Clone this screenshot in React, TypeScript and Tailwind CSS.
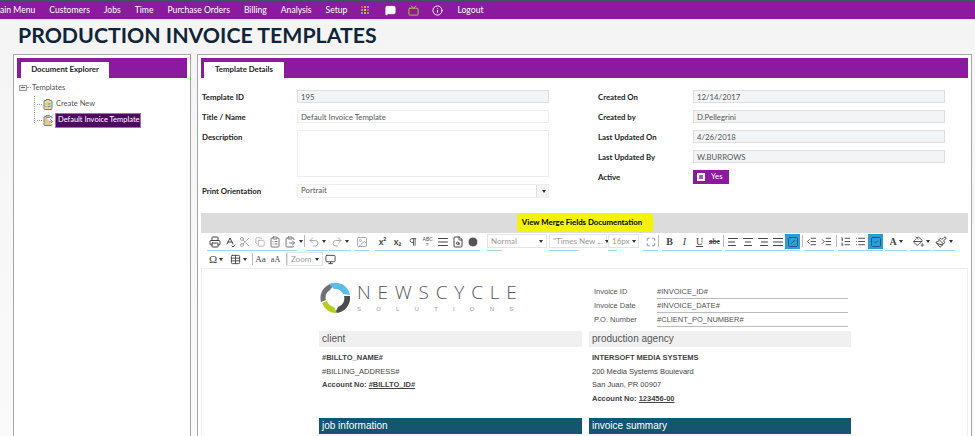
import type { ReactNode } from "react";
import {
  AlignCenter, AlignJustify, AlignLeft, AlignRight, ClipboardList, ClipboardPaste, Copy, Clock,
  FileSearch, Image, IndentDecrease, IndentIncrease, Info, List, ListOrdered, Maximize, MessageSquare,
  Monitor, PaintBucket, Paintbrush, Pilcrow, Printer, Redo2, Scissors, SpellCheck, SquareCheck, SquareSlash,
  Table, TextAlignJustify, Tv, Undo2,
} from "lucide-react";

const menu = ["ain Menu", "Customers", "Jobs", "Time", "Purchase Orders", "Billing", "Analysis", "Setup"];

function Caret() {
  return <span className="w-0 h-0 ml-[2px] border-x-[2px] border-x-transparent border-t-[3px] border-t-[#333]" />;
}

function Tool({ children, active, caret }: { children: ReactNode; active?: boolean; caret?: boolean }) {
  return (
    <span className={`flex items-center justify-center h-[15px] text-[#444] shrink-0 ${caret ? "w-[22px]" : "w-[15px]"} ${active ? "bg-[#2a9fd6]" : ""}`}>
      {children}
      {caret && <Caret />}
    </span>
  );
}

function Group({ children, className = "" }: { children: ReactNode; className?: string }) {
  return <div className={`flex h-[17px] border-b border-[#a9d6ec] ${className}`}>{children}</div>;
}

function Sep({ className = "" }: { className?: string }) {
  return <span className={`w-px h-[12px] mt-[1px] bg-[#bbb] shrink-0 ${className}`} />;
}

function Pick({ label, width, line, className = "" }: { label: string; width: string; line: string; className?: string }) {
  return (
    <div className={`flex flex-col shrink-0 ${width} ${className}`}>
      <span className="flex items-center justify-between h-[14px] px-[3px] border border-[#e4e4e4] text-[8px] text-[#999] whitespace-nowrap">
        {label}
        <Caret />
      </span>
      <span className={`mt-[2px] h-px bg-[#a9d6ec] ${line}`} />
    </div>
  );
}

function Field({ label, value, grey, h = "h-[13px]" }: { label: string; value?: string; grey?: boolean; h?: string }) {
  return (
    <div className="flex items-start">
      <span className="w-[95px] h-[13px] font-bold text-[#222] leading-[14px]">{label}</span>
      <span className={`w-[252px] px-[3px] leading-[12px] border text-[#555] ${h} ${grey ? "bg-[#f3f4f6] border-[#dedede]" : "bg-white border-[#eee]"}`}>
        {value}
      </span>
    </div>
  );
}

function Logo() {
  return (
    <svg viewBox="0 0 32 32" className="w-[32px] h-[32px] shrink-0">
      <path d="M16 1 A15 15 0 0 0 2 20 L7 18 A9 9 0 0 1 11 8 Z" fill="#6f7072" />
      <path d="M10 2 A15 15 0 0 1 31 13 L24 12 A9 9 0 0 0 15 7 Z" fill="#5cbde5" />
      <path d="M31 14 A15 15 0 0 1 16 31 L19 25 A9 9 0 0 0 25 14 Z" fill="#4b4c50" />
      <path d="M3 21 A15 15 0 0 0 18 31 L15 25 A9 9 0 0 1 8 19 Z" fill="#b6cd1c" />
    </svg>
  );
}

function Invoice({ label, value }: { label: string; value: string }) {
  return (
    <div className="flex items-start h-[14px] pl-[5px]">
      <span className="w-[63px] text-[#555]">{label}</span>
      <span className="w-[191px] h-[13px] border-b border-[#bbb] text-[#555]">{value}</span>
    </div>
  );
}

export default function App() {
  return (
    <div className="w-[975px] h-[436px] overflow-hidden bg-gradient-to-b from-[#f4f4f4] to-[#fafafa] font-['Lato',sans-serif] text-[7.8px]">
      <nav className="flex items-center h-[19px] bg-[#8b1a9f] border-t border-[#44506a] text-white text-[8.6px] gap-[14px]">
        {menu.map(m => <span key={m}>{m}</span>)}
        <span className="grid grid-cols-3 gap-px">
          <span className="w-[2px] h-[2px] bg-[#e05050]" /><span className="w-[2px] h-[2px] bg-[#e8a040]" /><span className="w-[2px] h-[2px] bg-[#50b0e0]" />
          <span className="w-[2px] h-[2px] bg-[#60c060]" /><span className="w-[2px] h-[2px] bg-[#e8d040]" /><span className="w-[2px] h-[2px] bg-[#e05050]" />
          <span className="w-[2px] h-[2px] bg-[#50b0e0]" /><span className="w-[2px] h-[2px] bg-[#e8a040]" /><span className="w-[2px] h-[2px] bg-[#60c060]" />
        </span>
        <MessageSquare className="w-[11px] h-[11px] ml-[2px] fill-white" />
        <Tv className="w-[11px] h-[11px] -ml-[2px] text-[#b4d334]" />
        <Info className="w-[11px] h-[11px] -ml-px" />
        <span>Logout</span>
      </nav>

      <h1 className="pl-[18px] h-[35px] leading-[32px] text-[21.3px] font-bold text-[#10253a]">PRODUCTION INVOICE TEMPLATES</h1>

      <div className="flex gap-[6px] pl-[13px] pr-[4px]">
        <aside className="w-[178px] h-[390px] shrink-0 bg-white border border-[#a6a6a6] p-[3px]">
          <div className="flex items-end h-[20px] pl-[4px] bg-[#8b1a9f]">
            <span className="flex items-center justify-center w-[88px] h-[16px] bg-white font-bold text-[#222]">Document Explorer</span>
          </div>
          <div className="pl-[2px] pt-[3px] text-[#555] text-[7.5px]">
            <div className="flex items-center h-[13px]">
              <span className="flex items-center justify-center w-[8px] h-[6px] border border-[#999] bg-[#eee]"><span className="w-[4px] h-px bg-[#666]" /></span>
              <span className="w-[4px] border-b border-dotted border-[#999]" />
              <span className="ml-[1px]">Templates</span>
            </div>
            <div className="ml-[15px] h-[27px] border-l border-dotted border-[#999]">
              <div className="flex items-center h-[16px] mt-[2px] pl-[2px]">
                <span className="w-[5px] border-b border-dotted border-[#999]" />
                <ClipboardList className="w-[12px] h-[13px] text-[#5f7fa8] fill-[#f6d98a]" />
                <span className="ml-[2px]">Create New</span>
              </div>
              <div className="flex items-center h-[16px] pl-[2px]">
                <span className="w-[5px] border-b border-dotted border-[#999]" />
                <ClipboardPaste className="w-[12px] h-[13px] text-[#6a84a8] fill-[#e8c98a]" />
                <span className="ml-[1px] flex items-center w-[86px] h-[15px] pl-[2px] bg-[#4d0a5e] border border-[#9a7aa8] text-white whitespace-nowrap">Default Invoice Template</span>
              </div>
            </div>
          </div>
        </aside>

        <main className="w-[775px] h-[390px] shrink-0 bg-white border border-[#a6a6a6] p-[3px]">
          <div className="flex items-end h-[20px] pl-[3px] bg-[#8b1a9f]">
            <span className="flex items-center justify-center w-[80px] h-[16px] bg-white font-bold text-[#222]">Template Details</span>
          </div>

          <div className="flex h-[135px] pt-[12px] pl-[1px]">
            <div className="flex flex-col gap-[7px] w-[396px]">
              <Field label="Template ID" value="195" grey />
              <Field label="Title / Name" value="Default Invoice Template" />
              <Field label="Description" h="h-[47px]" />
              <div className="flex items-start">
                <span className="w-[95px] h-[13px] font-bold text-[#222] leading-[14px]">Print Orientation</span>
                <span className="flex items-center justify-between w-[252px] h-[14px] pl-[3px] border border-[#eee] text-[#555]">
                  Portrait
                  <span className="flex items-center justify-center w-[12px] h-full bg-[#f4f4f4] border-l border-[#ddd]"><Caret /></span>
                </span>
              </div>
            </div>
            <div className="flex flex-col gap-[7px]">
              <Field label="Created On" value="12/14/2017" grey />
              <Field label="Created by" value="D.Pellegrini" grey />
              <Field label="Last Updated On" value="4/26/2018" grey />
              <Field label="Last Updated By" value="W.BURROWS" grey />
              <div className="flex items-start">
                <span className="w-[95px] h-[13px] font-bold text-[#222] leading-[14px]">Active</span>
                <span className="flex items-center gap-[6px] w-[36px] h-[14px] pl-[4px] bg-[#8b1a9f] text-white">
                  <span className="w-[8px] h-[8px] bg-[#a060b0] border-2 border-white" />Yes
                </span>
              </div>
            </div>
          </div>

          <div className="flex justify-center h-[20px] bg-[#dcdcdc]">
            <span className="flex items-center justify-center w-[136px] h-[18px] mt-[1px] pr-[5px] bg-[#f4f400] rounded-[3px] font-bold text-black">View Merge Fields Documentation</span>
          </div>

          <div className="flex h-[18px] mt-px pl-[6px]">
            <Group>
              <Tool><Printer size={12} /></Tool>
              <Tool><SpellCheck size={12} /></Tool>
              <Tool><Scissors size={12} className="text-[#aaa]" /></Tool>
              <Tool><Copy size={10} className="text-[#aaa]" /></Tool>
              <Tool><ClipboardList size={12} className="text-[#777]" /></Tool>
              <Tool><ClipboardPaste size={12} className="text-[#777]" /></Tool>
            </Group>
            <span className="flex items-center h-[15px] w-[7px]"><Caret /></span>
            <Sep />
            <Group className="ml-px"><Tool caret><Undo2 size={12} className="text-[#aaa]" /></Tool></Group>
            <Group className="ml-px"><Tool caret><Redo2 size={12} className="text-[#aaa]" /></Tool></Group>
            <Group className="ml-[3px]"><Tool><Image size={12} className="text-[#aaa]" /></Tool></Group>
            <Group className="ml-[6px]">
              <Tool><span className="font-bold text-[9px]">x²</span></Tool>
              <Tool><span className="font-bold text-[9px]">x₂</span></Tool>
              <Tool><Pilcrow size={10} /></Tool>
              <Tool><span className="text-[5px] leading-[5px] text-center">ABC<br />≡</span></Tool>
              <Tool><TextAlignJustify size={12} /></Tool>
              <Tool><FileSearch size={12} /></Tool>
              <Tool><Clock size={12} className="fill-[#555] text-white" /></Tool>
            </Group>
            <Pick label="Normal" width="w-[60px]" line="w-[15px]" className="ml-[7px]" />
            <Pick label={'"Times New ...'} width="w-[58px]" line="w-[30px]" className="ml-[2px]" />
            <Pick label="16px" width="w-[31px]" line="w-[9px]" className="ml-px" />
            <Group className="ml-[4px]"><Tool><Maximize size={10} className="text-[#777]" /></Tool></Group>
            <Sep />
            <Group className="ml-[3px]">
              <Tool><span className="font-bold font-['Liberation_Serif',serif] text-[10px]">B</span></Tool>
              <Tool><span className="italic font-['Liberation_Serif',serif] text-[10px]">I</span></Tool>
              <Tool><span className="underline font-['Liberation_Serif',serif] text-[10px]">U</span></Tool>
              <Tool><span className="line-through font-bold text-[7px]">abc</span></Tool>
            </Group>
            <Sep className="ml-px" />
            <Group className="ml-px">
              <Tool><AlignLeft size={12} /></Tool>
              <Tool><AlignCenter size={12} /></Tool>
              <Tool><AlignRight size={12} /></Tool>
              <Tool><AlignJustify size={12} /></Tool>
              <Tool active><SquareSlash size={12} className="text-[#1f5d7c]" /></Tool>
            </Group>
            <Sep className="ml-[2px]" />
            <Group className="ml-px">
              <Tool><IndentDecrease size={11} /></Tool>
              <Tool><IndentIncrease size={11} /></Tool>
            </Group>
            <Sep className="ml-[2px]" />
            <Group className="ml-px">
              <Tool><ListOrdered size={11} /></Tool>
              <Tool><List size={11} /></Tool>
              <Tool active><SquareCheck size={12} className="text-[#1f5d7c]" /></Tool>
            </Group>
            <Group className="ml-[2px]"><Tool caret><span className="font-bold font-['Liberation_Serif',serif] text-[10px]">A</span></Tool></Group>
            <Group className="ml-[3px]"><Tool caret><PaintBucket size={11} /></Tool></Group>
            <Group className="ml-px"><Tool caret><Paintbrush size={12} /></Tool></Group>
          </div>

          <div className="flex items-start h-[16px] pl-[4px]">
            <Tool caret><span className="font-['Liberation_Serif',serif] text-[11px]">Ω</span></Tool>
            <Tool caret><Table size={11} /></Tool>
            <Sep className="ml-[3px]" />
            <Tool><span className="font-['Liberation_Serif',serif] text-[9px]">Aa</span></Tool>
            <Tool><span className="font-['Liberation_Serif',serif] text-[8px]">aA</span></Tool>
            <Sep className="ml-[3px]" />
            <span className="flex items-center justify-between w-[36px] h-[14px] px-[3px] border border-[#e4e4e4] text-[8px] text-[#999]">Zoom<Caret /></span>
            <Tool><Monitor size={11} /></Tool>
          </div>

          <div className="h-[170px] border border-[#eee] font-['Liberation_Sans',sans-serif] text-[7.5px] text-[#444] pl-[117px] pt-[13px]">
            <div className="flex h-[49px]">
              <div className="flex w-[270px]">
                <Logo />
                <div className="ml-[6px] w-[163px]">
                  <div className="text-[19px] leading-[20px] text-[#55565a] tracking-[6.8px] whitespace-nowrap font-['Open_Sans',sans-serif] font-light">NEWSCYCLE</div>
                  <div className="text-[6px] leading-[8px] mt-[3px] text-[#9a9a9a] tracking-[15.2px] whitespace-nowrap">SOLUTIONS</div>
                </div>
              </div>
              <div className="pt-[4px]">
                <Invoice label="Invoice ID" value="#INVOICE_ID#" />
                <Invoice label="Invoice Date" value="#INVOICE_DATE#" />
                <Invoice label="P.O. Number" value="#CLIENT_PO_NUMBER#" />
              </div>
            </div>

            <div className="grid grid-cols-[263px_262px] gap-x-[7px] w-[532px]">
              <div className="h-[16px] pl-[3px] bg-[#f0f0f0] text-[10px] leading-[16px] text-[#555]">client</div>
              <div className="h-[16px] pl-[3px] bg-[#f0f0f0] text-[10px] leading-[16px] text-[#555]">production agency</div>
              <div className="h-[71px] pl-[3px] pt-[4px] leading-[13.6px]">
                <div className="font-bold">#BILLTO_NAME#</div>
                <div>#BILLING_ADDRESS#</div>
                <div><b>Account No: <u>#BILLTO_ID#</u></b></div>
              </div>
              <div className="h-[71px] pl-[3px] pt-[4px] leading-[13.6px]">
                <div className="font-bold">INTERSOFT MEDIA SYSTEMS</div>
                <div>200 Media Systems Boulevard</div>
                <div>San Juan, PR 00907</div>
                <div><b>Account No: <u>123456-00</u></b></div>
              </div>
              <div className="h-[16px] pl-[3px] bg-[#14566f] text-[10px] leading-[16px] text-white">job information</div>
              <div className="h-[16px] pl-[3px] bg-[#14566f] text-[10px] leading-[16px] text-white">invoice summary</div>
            </div>
          </div>
        </main>
      </div>
    </div>
  );
}
